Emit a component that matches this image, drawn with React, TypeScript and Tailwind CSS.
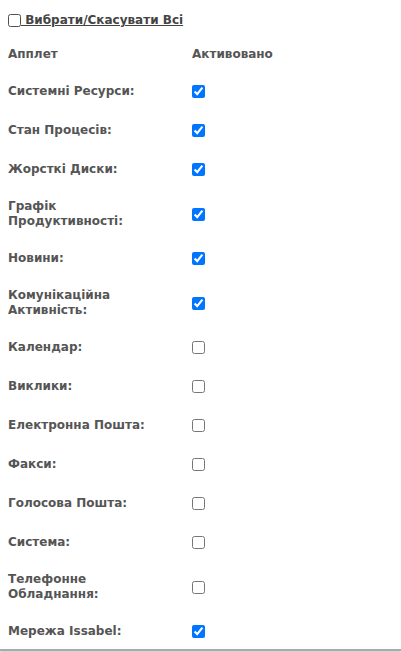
import React from 'react';

const applets: { name: React.ReactNode; active: boolean }[] = [
  { name: 'Системні Ресурси:', active: true },
  { name: 'Стан Процесів:', active: true },
  { name: 'Жорсткі Диски:', active: true },
  { name: <>Графік<br />Продуктивності:</>, active: true },
  { name: 'Новини:', active: true },
  { name: <>Комунікаційна<br />Активність:</>, active: true },
  { name: 'Календар:', active: false },
  { name: 'Виклики:', active: false },
  { name: 'Електронна Пошта:', active: false },
  { name: 'Факси:', active: false },
  { name: 'Голосова Пошта:', active: false },
  { name: 'Система:', active: false },
  { name: <>Телефонне<br />Обладнання:</>, active: false },
  { name: 'Мережа Issabel:', active: true },
];

const App: React.FC = () => {
  return (
    <div className="h-[652px] bg-white font-['DejaVu_Sans',Verdana,sans-serif] text-[12px] text-[#555]">
      <div className="border-b-2 border-[#aaa] shadow-[0_1px_2px_rgba(0,0,0,0.25)] h-[651px]">
        <label className="flex items-center pl-[6px] pt-[11px] font-bold text-[#444] text-[12px]">
          <input type="checkbox" className="m-0 ml-[2px] h-[13px] w-[13px]" />
          <span className="underline">&nbsp;Вибрати/Скасувати Всі</span>
        </label>
        <div className="grid grid-cols-[184px_1fr] pl-[8px] pt-[18px] font-bold leading-[15px]">
          <div className="pb-[10px]">Апплет</div>
          <div className="pb-[10px]">Активовано</div>
          {applets.map((a, i) => (
            <React.Fragment key={i}>
              <div className="flex items-center py-[10px] min-h-[39px]">
                <div>{a.name}</div>
              </div>
              <div className="flex items-center py-[10px]">
                <input type="checkbox" defaultChecked={a.active} className="m-0 h-[13px] w-[13px]" />
              </div>
            </React.Fragment>
          ))}
        </div>
      </div>
    </div>
  );
};

export default App;
